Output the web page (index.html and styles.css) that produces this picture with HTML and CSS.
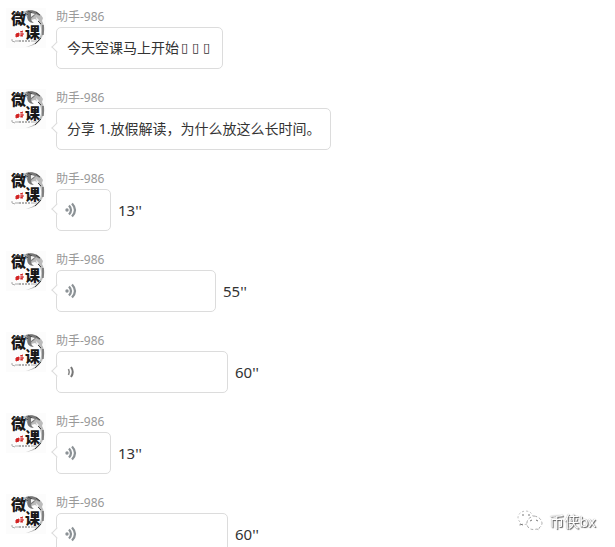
FILE: index.html
```
<!DOCTYPE html>
<html lang="zh-CN">
<head>
    <meta charset="UTF-8">
    <meta name="viewport" content="width=device-width, initial-scale=1.0">
    <title>助手-986</title>
    <link rel="stylesheet" href="styles.css">
</head>
<body>
    <!-- shared drawings -->
    <svg class="defs" aria-hidden="true">
        <symbol id="avatar" viewBox="0 0 40 40">
            <rect width="40" height="40" fill="#fcfcfc"/>
            <path d="M15 5C21 1 30 1 35 7L37 10L36 13C39 18 39 24 36 29C33 35 28 38 20 39C28 37 34 32 35 25C36 18 33 13 29 11L25 12C23 11 20 9 19 6Z" fill="#bbb"/>
            <path d="M20 3C26 1 32 3 34 8L30 6L27 9C24 10 25 13 28 15C22 15 20 10 22 7Z" fill="#777"/>
            <path d="M19 5L22 7M22 3L26 5M30 4L34 7M32 13L35 16M37 17V27M35 30L29 36" stroke="#444" stroke-width="1" fill="none"/>
            <path d="M25 5L29 6L25 9ZM30 9L33 12L31 14Z" fill="#f4f4f4"/>
            <text x="5" y="16" class="avatar-big">微</text>
            <text x="19" y="30" class="avatar-big">课</text>
            <path d="M10 26L13 25V28L10 29ZM14 24L17 23M14 26H18M14 28L17 27M16 23V29" stroke="#d22222" stroke-width="1" fill="#d22222"/>
            <path d="M6 31V33L9 34M9 33H13M25 33H31" stroke="#aaa" stroke-width="1" fill="none"/>
            <path d="M13 33H24" stroke="#666" stroke-width="1" stroke-dasharray="2 1"/>
        </symbol>
        <symbol id="voice" viewBox="0 0 14 16">
            <circle cx="3" cy="8" r="1.7" fill="#8c9296"/>
            <path d="M5 3.5Q9 8 5 12.5M8 1.5Q14 8 8 14.5" fill="none" stroke="#8c9296" stroke-width="2.2"/>
        </symbol>
        <symbol id="voice-playing" viewBox="0 0 14 16">
            <path d="M4.5 5Q6 8 4.5 11" fill="none" stroke="#888" stroke-width="1.6"/>
            <path d="M7 3Q10.5 8 7 13" fill="none" stroke="#777" stroke-width="2"/>
        </symbol>
    </svg>

    <main class="chat">
        <article class="message">
            <svg class="avatar"><use href="#avatar"/></svg>
            <div class="content">
                <div class="name">助手-986</div>
                <div class="bubble">今天空课马上开始<span class="glyph">▯</span><span class="glyph">▯</span><span class="glyph">▯</span></div>
            </div>
        </article>
        <article class="message">
            <svg class="avatar"><use href="#avatar"/></svg>
            <div class="content">
                <div class="name">助手-986</div>
                <div class="bubble">分享 1.放假解读，为什么放这么长时间。</div>
            </div>
        </article>
        <article class="message">
            <svg class="avatar"><use href="#avatar"/></svg>
            <div class="content">
                <div class="name">助手-986</div>
                <div class="voice">
                    <button type="button" class="bubble" style="width: 55px" aria-label="播放语音"><svg class="icon"><use href="#voice"/></svg></button>
                    <span class="duration">13''</span>
                </div>
            </div>
        </article>
        <article class="message">
            <svg class="avatar"><use href="#avatar"/></svg>
            <div class="content">
                <div class="name">助手-986</div>
                <div class="voice">
                    <button type="button" class="bubble" style="width: 160px" aria-label="播放语音"><svg class="icon"><use href="#voice"/></svg></button>
                    <span class="duration">55''</span>
                </div>
            </div>
        </article>
        <article class="message">
            <svg class="avatar"><use href="#avatar"/></svg>
            <div class="content">
                <div class="name">助手-986</div>
                <div class="voice">
                    <button type="button" class="bubble" style="width: 172px" aria-label="暂停语音"><svg class="icon"><use href="#voice-playing"/></svg></button>
                    <span class="duration">60''</span>
                </div>
            </div>
        </article>
        <article class="message">
            <svg class="avatar"><use href="#avatar"/></svg>
            <div class="content">
                <div class="name">助手-986</div>
                <div class="voice">
                    <button type="button" class="bubble" style="width: 55px" aria-label="播放语音"><svg class="icon"><use href="#voice"/></svg></button>
                    <span class="duration">13''</span>
                </div>
            </div>
        </article>
        <article class="message">
            <svg class="avatar"><use href="#avatar"/></svg>
            <div class="content">
                <div class="name">助手-986</div>
                <div class="voice">
                    <button type="button" class="bubble" style="width: 172px" aria-label="播放语音"><svg class="icon"><use href="#voice"/></svg></button>
                    <span class="duration">60''</span>
                </div>
            </div>
        </article>
    </main>

    <div class="watermark">
        <svg class="wechat" viewBox="0 0 26 22" aria-hidden="true">
            <path d="M10 14Q7 15 5 14L3 16V12Q1 10 1 7Q2 2 8 1Q14 1 16 6" fill="#fff" stroke="#bbb" stroke-width="1" stroke-dasharray="2 2"/>
            <path d="M17 6Q24 7 25 13Q25 16 22 18V20L20 19Q12 21 10 15Q9 8 17 6Z" fill="#fff" stroke="#aaa" stroke-width="1" stroke-dasharray="3 2"/>
            <path d="M5 5H7M11 5H13M13 11L15 10M19 10L21 11M3 14L6 15" stroke="#777" stroke-width="1" fill="none"/>
        </svg>
        <span>币侠bx</span>
    </div>
</body>
</html>
```
FILE: styles.css
```
:root {
    --border-color: #dcdcdc;
    --text-color: #333333;
    --name-color: #999999;
}
* {
    box-sizing: border-box;
}
body {
    font-family: "Noto Sans", "Noto Sans CJK SC", sans-serif;
    font-size: 14px;
    margin: 0;
    background-color: #ffffff;
    color: var(--text-color);
    height: 100vh;
    overflow: hidden;
}
.defs {
    display: none;
}
.chat {
    display: flex;
    flex-direction: column;
    gap: 20px;
    padding: 8px 6px;
}
.message {
    display: flex;
    align-items: flex-start;
    gap: 10px;
}
.avatar {
    width: 40px;
    height: 40px;
    flex-shrink: 0;
}
.avatar-big {
    font-family: "Noto Sans CJK SC", sans-serif;
    font-size: 15px;
    font-weight: 900;
    fill: #181818;
}
.content {
    display: flex;
    flex-direction: column;
    align-items: flex-start;
    gap: 1px;
}
.name {
    font-size: 12px;
    line-height: 18px;
    color: var(--name-color);
}
.bubble {
    position: relative;
    display: flex;
    align-items: center;
    height: 42px;
    padding: 0 10px;
    font: inherit;
    line-height: 20px;
    color: inherit;
    text-align: left;
    background-color: #ffffff;
    border: 1px solid var(--border-color);
    border-radius: 5px;
}
/* little arrow towards the avatar */
.bubble::before {
    content: "";
    position: absolute;
    left: -4px;
    top: 15px;
    width: 7px;
    height: 7px;
    background-color: #ffffff;
    border-left: 1px solid var(--border-color);
    border-bottom: 1px solid var(--border-color);
    transform: rotate(45deg);
}
.glyph {
    width: 11px;
    text-align: center;
    font-family: "DejaVu Sans", sans-serif;
    font-size: 13px;
}
.voice {
    display: flex;
    align-items: center;
    gap: 7px;
}
.voice .bubble {
    padding: 0 7px;
    cursor: pointer;
}
.icon {
    width: 14px;
    height: 16px;
}
.duration {
    font-size: 15px;
    line-height: 20px;
}
.watermark {
    position: fixed;
    right: 19px;
    bottom: 14px;
    display: flex;
    align-items: center;
    gap: 6px;
    font-size: 15px;
    line-height: 24px;
    color: #ffffff;
    text-shadow: 1px 1px 1px #555555, 0 0 1px #777777;
}
.wechat {
    width: 26px;
    height: 22px;
}
```
